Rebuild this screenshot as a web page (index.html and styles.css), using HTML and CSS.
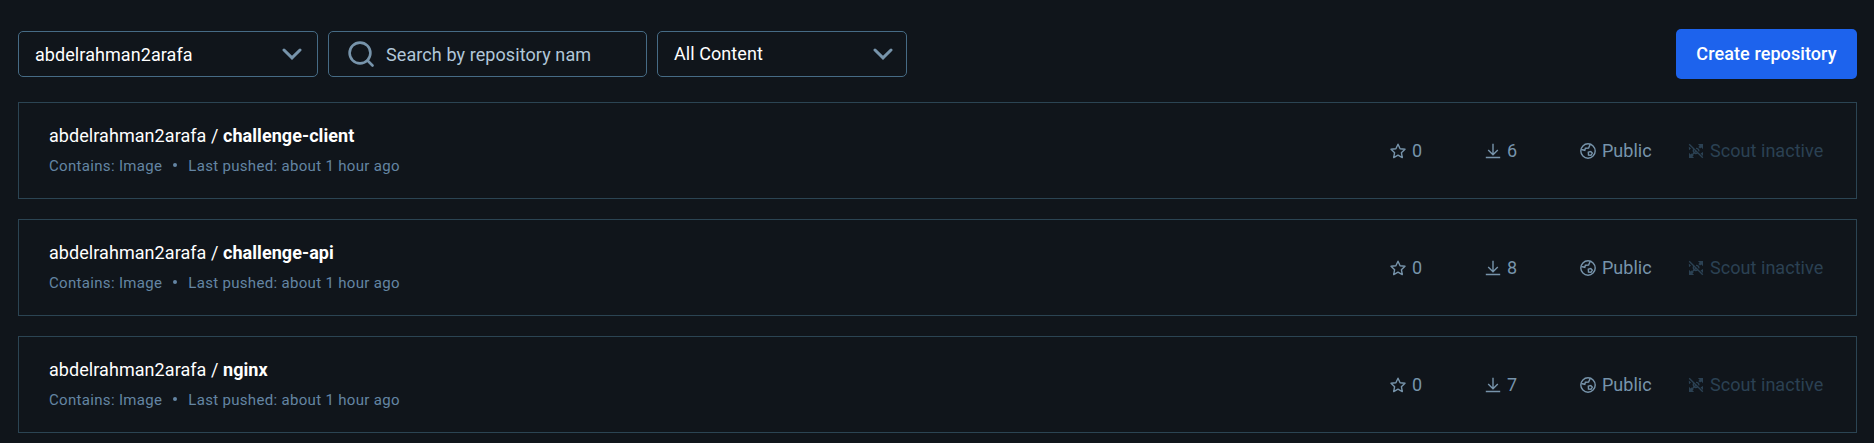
FILE: index.html
```html
<!DOCTYPE html>
<html lang="en">
<head>
<meta charset="utf-8">
<title>Repositories</title>
<link rel="stylesheet" href="styles.css">
</head>
<body>
<svg class="sprite" aria-hidden="true">
  <symbol id="chevron" viewBox="0 0 20 12"><path d="M2 2l8 7.8L18 2" fill="none" stroke="currentColor" stroke-width="3" stroke-linecap="round"/></symbol>
  <symbol id="search" viewBox="0 0 26 26"><g fill="none" stroke="currentColor" stroke-width="2.6" stroke-linecap="round"><circle cx="12" cy="12" r="10.4"/><path d="M19.5 19.5l5 5"/></g></symbol>
  <symbol id="star" viewBox="0 0 16 16"><path d="M8 1.2l2.1 4.5 4.9.6-3.6 3.4.9 4.9L8 12.2l-4.3 2.4.9-4.9L1 6.3l4.9-.6z" fill="none" stroke="currentColor" stroke-width="1.4" stroke-linejoin="round"/></symbol>
  <symbol id="download" viewBox="0 0 16 16"><path d="M8 .8v11M3.2 7L8 11.8 12.800 7M.8 14.500h14.400" fill="none" stroke="currentColor" stroke-width="1.4"/></symbol>
  <symbol id="globe" viewBox="0 0 16 16"><g fill="none" stroke="currentColor" stroke-width="1.4"><circle cx="8" cy="8" r="7.2"/><path d="M1.200 6.500l3.600.8.6-2.100 3.200-.2 1.600-3.600M8.300 9.200l2.500-.7 1.500 1.600-1.300 2.200-2.500-.3z"/></g></symbol>
  <symbol id="scout" viewBox="0 0 16 16"><g fill="currentColor"><path d="M9.800 1H15v5.200L13.400 4.400 12 5.600 10.400 4l1.200-1.400zM1 9.800l1.600 1.700L4 10.200l1.800 1.800-1.300 1.400L6.200 15H1zM.8 3.500l2.200 2L1 7.200zM12.500 10.500L15 9v4z"/><path d="M1.200 1.200l13.600 13.600M5.600 6.200c-1.200 2.500.8 5 3.800 4M8 5.400c2-.1 3.200 1.300 2.800 3M8 8L5 11" fill="none" stroke="currentColor" stroke-width="1.400"/></g></symbol>
</svg>
<main class="page">
  <header class="toolbar">
    <div class="field field-owner"><span>abdelrahman2arafa</span><svg class="chevron"><use href="#chevron"/></svg></div>
    <div class="field field-search"><svg class="search"><use href="#search"/></svg><span>Search by repository nam</span></div>
    <div class="field field-content"><span>All Content</span><svg class="chevron"><use href="#chevron"/></svg></div>
    <button class="create">Create repository</button>
  </header>
  <section class="repos">
    <article class="repo">
      <div class="info">
        <div class="name">abdelrahman2arafa / <b>challenge-client</b></div>
        <div class="meta"><span>Contains: Image</span><i class="dot"></i><span>Last pushed: about 1 hour ago</span></div>
      </div>
      <div class="stat stars"><svg><use href="#star"/></svg><span>0</span></div>
      <div class="stat pulls"><svg><use href="#download"/></svg><span>6</span></div>
      <div class="stat access"><svg><use href="#globe"/></svg><span>Public</span></div>
      <div class="stat scout"><svg><use href="#scout"/></svg><span>Scout inactive</span></div>
    </article>
    <article class="repo">
      <div class="info">
        <div class="name">abdelrahman2arafa / <b>challenge-api</b></div>
        <div class="meta"><span>Contains: Image</span><i class="dot"></i><span>Last pushed: about 1 hour ago</span></div>
      </div>
      <div class="stat stars"><svg><use href="#star"/></svg><span>0</span></div>
      <div class="stat pulls"><svg><use href="#download"/></svg><span>8</span></div>
      <div class="stat access"><svg><use href="#globe"/></svg><span>Public</span></div>
      <div class="stat scout"><svg><use href="#scout"/></svg><span>Scout inactive</span></div>
    </article>
    <article class="repo">
      <div class="info">
        <div class="name">abdelrahman2arafa / <b>nginx</b></div>
        <div class="meta"><span>Contains: Image</span><i class="dot"></i><span>Last pushed: about 1 hour ago</span></div>
      </div>
      <div class="stat stars"><svg><use href="#star"/></svg><span>0</span></div>
      <div class="stat pulls"><svg><use href="#download"/></svg><span>7</span></div>
      <div class="stat access"><svg><use href="#globe"/></svg><span>Public</span></div>
      <div class="stat scout"><svg><use href="#scout"/></svg><span>Scout inactive</span></div>
    </article>
  </section>
</main>
</body>
</html>
```
FILE: styles.css
```css
* { box-sizing: border-box; }
body { margin: 0; background: #10151b; color: #fff; font: 18px/24px Roboto, sans-serif; overflow: hidden; }
.sprite { display: none; }
.page { padding: 29px 17px 0 18px; }
.toolbar { display: flex; align-items: center; height: 50px; gap: 10px; }
.field { display: flex; align-items: center; justify-content: space-between; height: 46px; padding: 0 15px 0 16px; border: 1px solid #466b85; border-radius: 5px; white-space: nowrap; letter-spacing: 0.07px; }
.field span { padding-top: 2px; }
.field-owner { width: 300px; }
.field-search { width: 319px; justify-content: flex-start; gap: 12px; padding-left: 19px; color: #b1c7d9; letter-spacing: 0.09px; }
.field-content { width: 250px; padding-right: 13px; }
.field-content span { padding-top: 0; }
.chevron { width: 20px; height: 12px; color: #7794ab; }
.search { width: 26px; height: 26px; color: #7794ab; }
.create { width: 181px; height: 50px; margin-left: auto; padding: 0; border: 0; border-radius: 5px; background: #1d63ed; color: #fff; font: 500 18px/24px Roboto, sans-serif; letter-spacing: 0.09px; white-space: nowrap; }
.repos { display: grid; gap: 20px; margin-top: 23px; }
.repo { display: flex; align-items: center; height: 97px; padding: 0 32px 0 30px; border: 1px solid #2b4453; }
.info { flex: 1; padding-top: 1px; }
.name { letter-spacing: 0.06px; }
.name b { font-weight: 700; }
.meta { display: flex; align-items: center; margin-top: 6px; color: #6485a3; font-size: 15px; letter-spacing: 0.32px; }
.dot { width: 4px; height: 4px; margin: 0 11px 2px 11px; border-radius: 50%; background: #6485a3; }
.stat { display: flex; align-items: center; gap: 6px; padding-top: 1px; color: #7794ab; white-space: nowrap; }
.stat svg { flex: none; width: 16px; height: 16px; }
.stars { width: 95px; }
.pulls { width: 95px; }
.access { width: 108px; }
.scout { width: 136px; color: #2b4153; letter-spacing: 0.05px; }
```
